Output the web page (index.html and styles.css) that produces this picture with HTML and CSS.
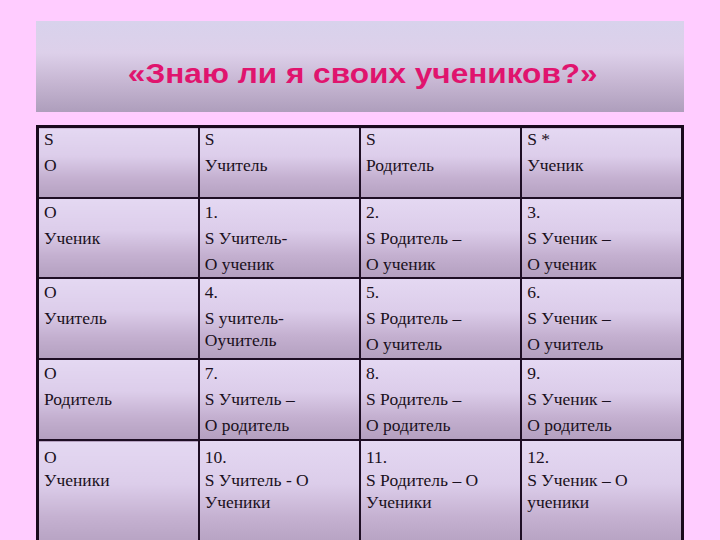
FILE: index.html
```html
<!DOCTYPE html>
<html lang="ru">
<head>
<meta charset="utf-8">
<title>Знаю ли я своих учеников?</title>
<link rel="stylesheet" href="styles.css">
</head>
<body>
<div class="slide">
  <div class="title-box">
    <h1 class="title">«Знаю ли я своих учеников?»</h1>
  </div>
  <table class="grid">
    <colgroup><col class="c"><col class="c"><col class="c"><col class="c"></colgroup>
    <tr class="r1">
      <td><p>S</p><p>О</p></td>
      <td><p>S</p><p>Учитель</p></td>
      <td><p>S</p><p>Родитель</p></td>
      <td><p>S *</p><p>Ученик</p></td>
    </tr>
    <tr class="r2">
      <td><p>О</p><p>Ученик</p></td>
      <td><p>1.</p><p>S Учитель-</p><p>О ученик</p></td>
      <td><p>2.</p><p>S Родитель –</p><p>О ученик</p></td>
      <td><p>3.</p><p>S Ученик –</p><p>О ученик</p></td>
    </tr>
    <tr class="r3">
      <td><p>О</p><p>Учитель</p></td>
      <td><p>4.</p><p>S учитель-Оучитель</p></td>
      <td><p>5.</p><p>S Родитель –</p><p>О учитель</p></td>
      <td><p>6.</p><p>S Ученик –</p><p>О учитель</p></td>
    </tr>
    <tr class="r4">
      <td><p>О</p><p>Родитель</p></td>
      <td><p>7.</p><p>S Учитель –</p><p>О родитель</p></td>
      <td><p>8.</p><p>S Родитель –</p><p>О родитель</p></td>
      <td><p>9.</p><p>S Ученик –</p><p>О родитель</p></td>
    </tr>
    <tr class="r5">
      <td><p>О</p><p>Ученики</p></td>
      <td><p>10.</p><p>S Учитель - О Ученики</p></td>
      <td><p>11.</p><p>S Родитель – О Ученики</p></td>
      <td><p>12.</p><p>S Ученик – О ученики</p></td>
    </tr>
  </table>
</div>
</body>
</html>
```
FILE: styles.css
```css
html, body {
  margin: 0;
  padding: 0;
  background: #ffccff;
}
body {
  width: 720px;
  height: 540px;
  overflow: hidden;
}
.slide {
  padding: 21px 36px 0 36px;
}
.title-box {
  height: 91px;
  background: linear-gradient(180deg, #d8d2ec 0%, #ddd0ea 35%, #c8b8d4 65%, #ae9ebc 100%);
  display: flex;
  align-items: center;
  justify-content: center;
  padding-top: 14px;
  padding-left: 6px;
  box-sizing: border-box;
}
.title {
  margin: 0;
  font-family: "Liberation Sans", Arial, sans-serif;
  font-weight: bold;
  font-size: 27px;
  line-height: 32px;
  color: #e0146e;
  transform: scaleX(1.17);
  white-space: nowrap;
}
.grid {
  margin-top: 13px;
  width: 648px;
  border-collapse: collapse;
  table-layout: fixed;
  border: 3px solid #1a0a1e;
}
.grid td {
  border: 2px solid #1e0e24;
  vertical-align: top;
  padding: 2px 4px 0 5px;
  background: linear-gradient(180deg, #e4d8f2 0%, #dccdea 40%, #c4b0d0 72%, #b4a0c0 100%);
  font-family: "Liberation Serif", "Times New Roman", serif;
  font-size: 17.5px;
  line-height: 22px;
  color: #1a1020;
}
.grid p {
  margin: 0;
}
.grid p + p {
  margin-top: 4px;
}
.r1 { height: 71px; }
.r1 td { padding-top: 0; }
.r2 { height: 80px; }
.r3 { height: 81px; }
.r4 { height: 81px; }
.r5 { height: 110px; }
.r5 td { padding-top: 5px; }
.r5 p + p { margin-top: 1px; }
```
